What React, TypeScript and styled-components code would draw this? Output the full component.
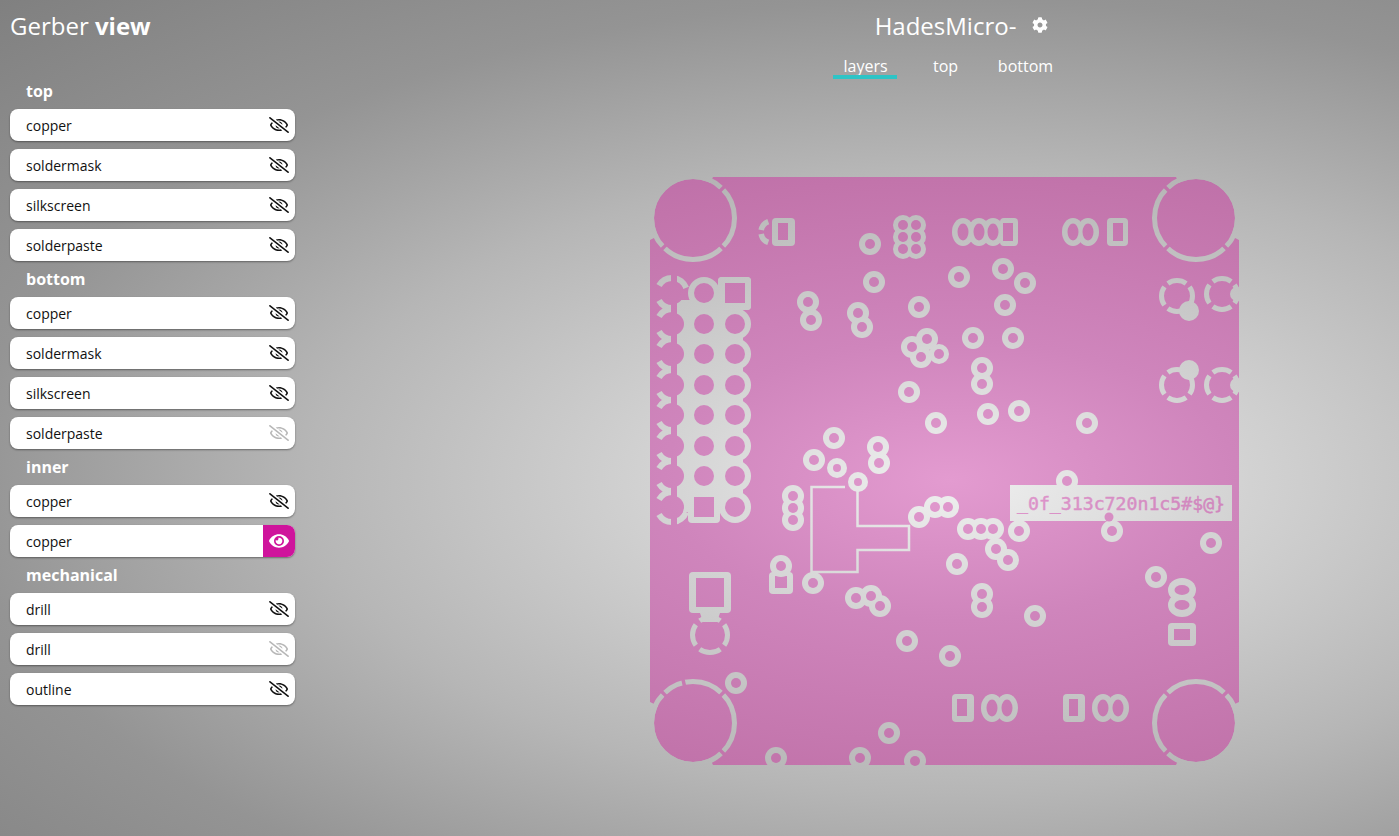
import React from "react";
import styled, { createGlobalStyle } from "styled-components";
import { FaCog, FaEye, FaRegEyeSlash } from "react-icons/fa";

const GlobalStyle = createGlobalStyle`
  html, body { margin: 0; padding: 0; height: 100%; overflow: hidden; }
  body { font-family: "Open Sans", "Liberation Sans", sans-serif; }
`;

const Page = styled.div`
  display: flex;
  height: 100vh;
  background: radial-gradient(
    ellipse 1367px 667px at 950px 480px,
    #f0f0f0 0%,
    #d2d2d2 22%,
    #b6b6b6 47%,
    #949494 72%,
    #8f8f8f 79%,
    #808080 100%
  );
  color: #fff;
`;

const Sidebar = styled.aside`
  width: 285px;
  padding: 0 10px;
  flex: none;
`;

const Brand = styled.h1`
  margin: 0;
  height: 73px;
  padding-top: 9px;
  box-sizing: border-box;
  font-size: 24px;
  line-height: 33px;
  font-weight: 400;
  b { font-weight: 700; }
`;

const GroupTitle = styled.div`
  height: 36px;
  line-height: 36px;
  padding-left: 16px;
  font-size: 16px;
  font-weight: 700;
`;

const Rows = styled.div`
  display: flex;
  flex-direction: column;
  gap: 8px;
`;

const Row = styled.div`
  display: flex;
  align-items: center;
  justify-content: space-between;
  height: 32px;
  padding-left: 16px;
  background: #fff;
  border-radius: 8px;
  overflow: hidden;
  box-shadow: 0 1px 2px rgba(0, 0, 0, 0.4);
  color: #111;
  font-size: 14px;
`;

const Toggle = styled.span<{ $on?: boolean; $faded?: boolean }>`
  display: flex;
  align-items: center;
  justify-content: center;
  width: 32px;
  height: 32px;
  background: ${(p) => (p.$on ? "#cf149c" : "transparent")};
  color: ${(p) => (p.$on ? "#fff" : "#111")};
  opacity: ${(p) => (p.$faded ? 0.3 : 1)};
`;

const Main = styled.main`
  margin-left: 186px;
  flex: 1;
  display: flex;
  flex-direction: column;
  align-items: center;
`;

const TitleRow = styled.div`
  display: flex;
  align-items: center;
  gap: 16px;
  height: 52px;
  padding-left: 33px;
`;

const Title = styled.div`
  font-size: 24px;
  line-height: 52px;
`;

const Gear = styled.span`
  display: flex;
  margin-bottom: 3px;
`;

const Tabs = styled.nav`
  display: grid;
  grid-template-columns: repeat(3, 80px);
  height: 27px;
  margin-left: 1px;
`;

const Tab = styled.div<{ $active?: boolean }>`
  display: flex;
  flex-direction: column;
  align-items: center;
  font-size: 16px;
  line-height: 28px;
  &::after {
    content: "";
    width: 64px;
    height: 4px;
    margin: -5px 0 0 -2px;
    background: ${(p) => (p.$active ? "#2ec4c6" : "transparent")};
  }
`;

const BoardSvg = styled.svg`
  display: block;
  flex: none;
  width: 600px;
  height: 600px;
  margin-top: 93px;
`;

const groups = [
  { name: "top", rows: [["copper"], ["soldermask"], ["silkscreen"], ["solderpaste"]] },
  { name: "bottom", rows: [["copper"], ["soldermask"], ["silkscreen"], ["solderpaste", "faded"]] },
  { name: "inner", rows: [["copper"], ["copper", "on"]] },
  { name: "mechanical", rows: [["drill"], ["drill", "faded"], ["outline"]] },
];

const GRAY = "url(#copper)";
const PINK = "url(#mask)";

// x, y, outer radius, hole radius
const vias: number[][] = [
  [870, 244, 11, 5], [874, 282, 11, 5], [919, 307, 11, 5], [959, 277, 11, 5],
  [808, 302, 11, 5], [811, 320, 11, 5], [858, 313, 11, 5], [862, 327, 11, 5],
  [912, 347, 11, 5], [927, 339, 11, 5], [921, 357, 11, 5], [939, 354, 10, 5],
  [903, 225, 10, 5], [916, 225, 10, 5], [903, 237, 10, 5], [916, 237, 10, 5], [903, 249, 10, 5], [916, 249, 10, 5],
  [1003, 269, 11, 5], [1025, 283, 11, 5], [1005, 305, 11, 5], [973, 338, 11, 5], [1013, 338, 11, 5],
  [982, 368, 11, 5], [982, 384, 11, 5], [988, 414, 11, 5], [1019, 411, 11, 5], [1087, 423, 11, 5],
  [909, 392, 11, 5], [936, 423, 11, 5], [834, 438, 11, 5], [814, 460, 11, 5], [837, 468, 10, 4],
  [858, 482, 10, 4], [878, 447, 11, 5], [879, 463, 11, 5],
  [793, 496, 11, 5], [793, 508, 11, 5], [793, 520, 11, 5],
  [919, 517, 11, 5], [935, 507, 11, 5], [948, 507, 11, 5],
  [1067, 481, 11, 5], [1019, 531, 11, 5], [1112, 531, 11, 5], [1211, 543, 11, 5],
  [968, 529, 11, 5], [981, 529, 11, 5], [993, 529, 11, 5], [996, 549, 11, 5], [1008, 560, 11, 5], [957, 564, 11, 5],
  [1156, 577, 11, 5], [813, 583, 11, 5], [856, 598, 11, 5], [871, 596, 11, 5], [880, 606, 11, 5],
  [907, 641, 11, 5], [950, 656, 11, 5], [736, 683, 11, 5], [889, 733, 11, 5],
  [776, 758, 11, 5], [860, 758, 11, 5], [915, 761, 11, 5],
  [982, 594, 11, 5], [982, 607, 11, 5], [1035, 616, 11, 5], [781, 566, 11, 5],
];

// x, y, w, h of a square pad and its square hole
const pads: number[][] = [
  [772, 218, 23, 28, 778, 223, 10, 17],
  [1000, 218, 18, 28, 1003, 223, 10, 18],
  [1107, 218, 21, 28, 1113, 223, 10, 18],
  [718, 277, 33, 33, 725, 283, 20, 20],
  [689, 572, 42, 41, 696, 578, 28, 29],
  [769, 572, 24, 22, 775, 576, 12, 12],
  [952, 694, 22, 28, 957, 699, 10, 17],
  [1063, 694, 22, 28, 1069, 699, 9, 17],
  [1168, 623, 28, 23, 1174, 629, 16, 11],
];

// x, y, outer rx, ry, hole rx, ry
const ovals: number[][] = [
  [963, 232, 11, 14, 5.5, 8.5], [979, 232, 11, 14, 5.5, 8.5], [993, 232, 11, 14, 5.5, 8.5],
  [1073, 232, 11, 14, 5.5, 8.5], [1088, 232, 11, 14, 5.5, 8.5],
  [992, 708, 11, 14, 5.5, 8.5], [1007, 708, 11, 14, 5.5, 8.5],
  [1103, 708, 11, 14, 5.5, 8.5], [1118, 708, 11, 14, 5.5, 8.5],
  [1182, 590, 14, 12, 7.5, 5], [1182, 605, 14, 12, 7.5, 5],
];

// fills the valleys between neighbouring oval pads
const webs: number[][] = [
  [963, 222, 40, 20], [1073, 222, 15, 20], [992, 698, 15, 20], [1103, 698, 15, 20], [1172, 590, 20, 15],
];

// center plus the angles (degrees) where the ring is cut
const corners: { x: number; y: number; gaps: number[] }[] = [
  { x: 693, y: 218, gaps: [-45, 45, 135] },
  { x: 1196, y: 218, gaps: [-135, 45, 135] },
  { x: 693, y: 723, gaps: [-135, -103, -45, 45] },
  { x: 1196, y: 723, gaps: [-135, -45, 135] },
];

const thermals: number[][] = [
  [1177, 296, 15.5], [1222, 294, 15.5], [1177, 385, 15.5], [1222, 385, 15.5], [710, 635, 17.5],
];

const headerRows = [293, 324, 354, 385, 415, 446, 476, 507];

const boardOutline =
  "M713 177 L1176 177 L1196 218 L1239 240 L1239 702 L1196 723 L1176 765 L713 765 L693 723 L650 702 L650 240 L693 218 Z";

function arc(cx: number, cy: number, r: number, from: number, to: number) {
  const rad = Math.PI / 180;
  const x0 = cx + r * Math.cos(from * rad);
  const y0 = cy + r * Math.sin(from * rad);
  const x1 = cx + r * Math.cos(to * rad);
  const y1 = cy + r * Math.sin(to * rad);
  return `M${x0} ${y0} A${r} ${r} 0 0 1 ${x1} ${y1}`;
}

function Board() {
  const rad = Math.PI / 180;
  return (
    <BoardSvg viewBox="645 172 600 600">
      <defs>
        <radialGradient id="copper" gradientUnits="userSpaceOnUse" cx="0" cy="0" r="667" gradientTransform="translate(950 480) scale(2.05 1)">
          <stop offset="0" stopColor="#f0f0f0" />
          <stop offset="0.22" stopColor="#d2d2d2" />
          <stop offset="0.47" stopColor="#b6b6b6" />
          <stop offset="0.72" stopColor="#949494" />
        </radialGradient>
        <radialGradient id="mask" gradientUnits="userSpaceOnUse" cx="0" cy="0" r="667" gradientTransform="translate(950 480) scale(2.05 1)">
          <stop offset="0" stopColor="#e39bd0" />
          <stop offset="0.21" stopColor="#cf85bc" />
          <stop offset="0.45" stopColor="#c274ab" />
          <stop offset="0.7" stopColor="#b262a2" />
        </radialGradient>
      </defs>

      <path d={boardOutline} fill={PINK} />

      {corners.map((c) => (
        <g key={`${c.x}-${c.y}`}>
          <circle cx={c.x} cy={c.y} r={39} fill={PINK} />
          <circle cx={c.x} cy={c.y} r={41.5} fill="none" stroke={GRAY} strokeWidth={5} />
          {c.gaps.map((a) => (
            <line
              key={a}
              x1={c.x + 38 * Math.cos(a * rad)}
              y1={c.y + 38 * Math.sin(a * rad)}
              x2={c.x + 47 * Math.cos(a * rad)}
              y2={c.y + 47 * Math.sin(a * rad)}
              stroke={PINK}
              strokeWidth={3.5}
            />
          ))}
        </g>
      ))}

      {/* pin header */}
      <rect x={677} y={300} width={66} height={212} fill={GRAY} />
      <rect x={688} y={490} width={32} height={33} rx={4} fill={GRAY} />
      {headerRows.map((y) => (
        <circle key={y} cx={735} cy={y} r={16} fill={GRAY} />
      ))}
      <circle cx={704} cy={293} r={16} fill={GRAY} />
      {headerRows.map((y) => (
        <g key={y} fill="none" stroke={GRAY} strokeWidth={6}>
          <path d={arc(672, y, 15, 90, 150)} />
          <path d={arc(672, y, 15, 210, 270)} />
        </g>
      ))}
      <path d={arc(672, 293, 15, -85, -20)} fill="none" stroke={GRAY} strokeWidth={6} />
      <path d={arc(672, 507, 15, 20, 85)} fill="none" stroke={GRAY} strokeWidth={6} />
      <rect x={671} y={275} width={6} height={252} fill={PINK} />
      {headerRows.map((y) => (
        <circle key={y} cx={673} cy={y} r={11} fill={PINK} />
      ))}
      {headerRows.slice(0, 7).map((y) => (
        <circle key={y} cx={704} cy={y} r={10} fill={PINK} />
      ))}
      {headerRows.slice(1).map((y) => (
        <circle key={y} cx={735} cy={y} r={10} fill={PINK} />
      ))}
      <rect x={718} y={277} width={33} height={33} rx={4} fill={GRAY} />
      <rect x={725} y={283} width={20} height={20} fill={PINK} />
      <rect x={694} y={497} width={20} height={20} fill={PINK} />

      {/* thermal relief rings */}
      {thermals.map(([x, y, r]) =>
        [-90, 0, 90, 180].map((a) => (
          <path key={`${x}-${y}-${a}`} d={arc(x, y, r, a - 36, a + 36)} fill="none" stroke={GRAY} strokeWidth={5} />
        ))
      )}
      <g fill="none" stroke={GRAY} strokeWidth={5.5}>
        <path d={arc(772, 232, 11, 110, 170)} />
        <path d={arc(772, 232, 11, 190, 250)} />
      </g>
      <polygon points="700,613 720,613 717,622 703,622" fill={GRAY} />
      <circle cx={1189} cy={311} r={10} fill={GRAY} />
      <circle cx={1189} cy={370} r={10} fill={GRAY} />
      <circle cx={1237} cy={294} r={7} fill={GRAY} />
      <circle cx={1237} cy={385} r={7} fill={GRAY} />

      {/* connectors */}
      {ovals.map(([x, y, rx, ry]) => (
        <ellipse key={`${x}-${y}`} cx={x} cy={y} rx={rx} ry={ry} fill={GRAY} />
      ))}
      {webs.map(([x, y, w, h]) => (
        <rect key={`${x}-${y}`} x={x} y={y} width={w} height={h} fill={GRAY} />
      ))}
      {pads.map(([x, y, w, h]) => (
        <rect key={`${x}-${y}`} x={x} y={y} width={w} height={h} rx={4} fill={GRAY} />
      ))}
      {pads.map(([, , , , x, y, w, h]) => (
        <rect key={`${x}-${y}`} x={x} y={y} width={w} height={h} fill={PINK} />
      ))}
      {ovals.map(([x, y, , , rx, ry]) => (
        <ellipse key={`${x}-${y}`} cx={x} cy={y} rx={rx} ry={ry} fill={PINK} />
      ))}

      {/* text label sits under the vias around it */}
      <rect x={1010} y={485} width={222} height={36} fill={GRAY} />
      <text
        x={1017}
        y={510}
        fontFamily="'DejaVu Sans Mono', monospace"
        fontSize={18.2}
        stroke={PINK}
        strokeWidth={0.5}
        fill={PINK}
      >
        _0f_313c720n1c5#$@{"}"}
      </text>

      {vias.map(([x, y, r]) => (
        <circle key={`${x}-${y}`} cx={x} cy={y} r={r} fill={GRAY} />
      ))}
      {vias.map(([x, y, , hole]) => (
        <circle key={`${x}-${y}`} cx={x} cy={y} r={hole} fill={PINK} />
      ))}
      <circle cx={1109} cy={517} r={4.5} fill={PINK} />

      {/* traces */}
      <path
        d="M845 487 L811.5 487 L811.5 572 L857.5 572 L857.5 550 L909 550 L909 526 L857.5 526 L857.5 490"
        fill="none"
        stroke={GRAY}
        strokeWidth={2.5}
      />
    </BoardSvg>
  );
}

export default function App() {
  return (
    <>
      <GlobalStyle />
      <Page>
        <Sidebar>
          <Brand>
            Gerber <b>view</b>
          </Brand>
          {groups.map((g) => (
            <section key={g.name}>
              <GroupTitle>{g.name}</GroupTitle>
              <Rows>
                {g.rows.map(([label, state], i) => (
                  <Row key={i}>
                    {label}
                    <Toggle $on={state === "on"} $faded={state === "faded"}>
                      {state === "on" ? <FaEye size={20} /> : <FaRegEyeSlash size={20} />}
                    </Toggle>
                  </Row>
                ))}
              </Rows>
            </section>
          ))}
        </Sidebar>
        <Main>
          <TitleRow>
            <Title>HadesMicro-</Title>
            <Gear>
              <FaCog size={16} />
            </Gear>
          </TitleRow>
          <Tabs>
            <Tab $active>layers</Tab>
            <Tab>top</Tab>
            <Tab>bottom</Tab>
          </Tabs>
          <Board />
        </Main>
      </Page>
    </>
  );
}
